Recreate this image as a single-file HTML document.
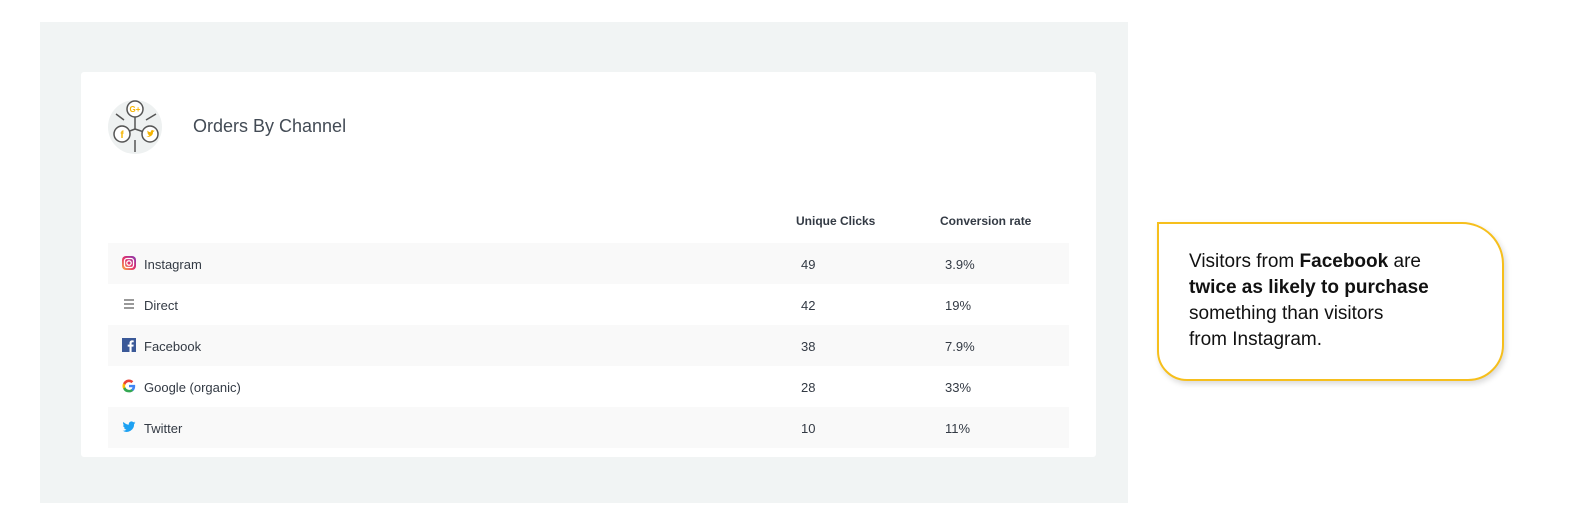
<!DOCTYPE html>
<html><head><style>
body{margin:0;width:1589px;height:521px;background:#fff;font-family:"Liberation Sans",Arial,sans-serif;position:relative;overflow:hidden}
.panel{position:absolute;left:40px;top:22px;width:1088px;height:481px;background:#f1f4f4}
.card{position:absolute;left:81px;top:72px;width:1015px;height:385px;background:#fff;border-radius:3px}
.title{position:absolute;left:193px;top:116px;font-size:18px;color:#434b55}
.th{position:absolute;top:214px;font-size:12px;font-weight:bold;color:#333a44}
.row{position:absolute;left:108px;width:961px;height:41px;font-size:13px;color:#333a44}
.row.s{background:#f9f9f9}
.row span{position:absolute;top:14px}
.row .n{left:36px}.row .a{left:693px}.row .b{left:837px}
.row svg{position:absolute;left:14px;top:13px}
.call{position:absolute;left:1157px;top:222px;width:343px;height:155px;border:2px solid #f6bf1c;border-radius:0 42px 36px 30px;box-shadow:2px 3px 6px rgba(0,0,0,.15);background:#fff}
.call p{margin:0;position:absolute;left:30px;top:25px;font-size:19px;line-height:26px;color:#111}
</style></head><body>
<div class="panel"></div>
<div class="card"></div>
<svg style="position:absolute;left:104px;top:96px" width="72" height="62" viewBox="0 0 72 62">
<circle cx="31" cy="31" r="27" fill="#eef1f1"/>
<g stroke="#555" stroke-width="1.5" fill="#fff">
<line x1="31" y1="20" x2="31" y2="33"/><line x1="31" y1="33" x2="18" y2="38"/><line x1="31" y1="33" x2="46" y2="38"/>
<line x1="31" y1="44" x2="31" y2="56"/><line x1="12" y1="18" x2="20" y2="24"/><line x1="42" y1="24" x2="52" y2="18"/>
<circle cx="31" cy="13" r="8"/><circle cx="18" cy="38" r="8"/><circle cx="46" cy="38" r="8"/></g>
<text x="31" y="16" font-size="8" fill="#f5b400" text-anchor="middle" font-weight="bold">G+</text>
<text x="18" y="42" font-size="10" fill="#f5b400" text-anchor="middle" font-weight="bold">f</text>
<path d="M51 35a3 3 0 0 1-1 .3 1.6 1.6 0 0 0 .7-.9 3 3 0 0 1-1 .4 1.6 1.6 0 0 0-2.8 1.5 4.5 4.5 0 0 1-3.3-1.7 1.6 1.6 0 0 0 .5 2.1 1.6 1.6 0 0 1-.7-.2 1.6 1.6 0 0 0 1.3 1.6 1.6 1.6 0 0 1-.7 0 1.6 1.6 0 0 0 1.5 1.1A3.2 3.2 0 0 1 42 40a4.5 4.5 0 0 0 7-4z" fill="#f5b400"/>
</svg>
<div class="title">Orders By Channel</div>
<div class="th" style="left:796px">Unique Clicks</div>
<div class="th" style="left:940px">Conversion rate</div>
<div class="row s" style="top:243px"><svg width="14" height="14"><defs><linearGradient id="ig" x1="0" y1="1" x2="1" y2="0"><stop offset="0" stop-color="#fbb040"/><stop offset=".5" stop-color="#e1306c"/><stop offset="1" stop-color="#833ab4"/></linearGradient></defs><rect width="14" height="14" rx="4" fill="url(#ig)"/><rect x="2.5" y="2.5" width="9" height="9" rx="2.5" fill="none" stroke="#fff" stroke-width="1.3"/><circle cx="7" cy="7" r="2.2" fill="none" stroke="#fff" stroke-width="1.3"/></svg><span class="n">Instagram</span><span class="a">49</span><span class="b">3.9%</span></div>
<div class="row" style="top:284px"><svg width="14" height="14"><g stroke="#555" stroke-width="1.2"><line x1="2" y1="3" x2="12" y2="3"/><line x1="2" y1="7" x2="12" y2="7"/><line x1="2" y1="11" x2="12" y2="11"/></g></svg><span class="n">Direct</span><span class="a">42</span><span class="b">19%</span></div>
<div class="row s" style="top:325px"><svg width="14" height="14"><rect width="14" height="14" fill="#3b5998"/><path d="M9.6 14V8.6h1.8l.3-2H9.6V5.3c0-.6.2-1 1-1h1.1V2.5c-.2 0-.9-.1-1.6-.1-1.6 0-2.6 1-2.6 2.7v1.5H5.7v2h1.8V14z" fill="#fff"/></svg><span class="n">Facebook</span><span class="a">38</span><span class="b">7.9%</span></div>
<div class="row" style="top:366px"><svg width="14" height="14" viewBox="0 0 24 24"><path d="M22.6 12.2c0-.8-.1-1.5-.2-2.2H12v4.2h6a5.1 5.1 0 0 1-2.2 3.4v2.8h3.6c2-1.9 3.2-4.7 3.2-8.2z" fill="#4285f4"/><path d="M12 23c3 0 5.5-1 7.4-2.7l-3.6-2.8c-1 .7-2.3 1.1-3.8 1.1-2.9 0-5.4-2-6.3-4.6H2v2.9A11 11 0 0 0 12 23z" fill="#34a853"/><path d="M5.7 14c-.2-.7-.4-1.4-.4-2s.1-1.4.4-2V7.1H2a11 11 0 0 0 0 9.8z" fill="#fbbc05"/><path d="M12 5.4c1.6 0 3.1.6 4.2 1.7l3.2-3.2A11 11 0 0 0 2 7.1L5.7 10c.9-2.6 3.4-4.6 6.3-4.6z" fill="#ea4335"/></svg><span class="n">Google (organic)</span><span class="a">28</span><span class="b">33%</span></div>
<div class="row s" style="top:407px"><svg width="14" height="14" viewBox="0 0 24 24"><path fill="#1da1f2" d="M23 4.6a9 9 0 0 1-2.6.7 4.6 4.6 0 0 0 2-2.5 9 9 0 0 1-2.9 1.1 4.5 4.5 0 0 0-7.7 4.1A12.8 12.8 0 0 1 2.5 3.300a4.5 4.5 0 0 0 1.4 6 4.5 4.5 0 0 1-2-.6 4.5 4.5 0 0 0 3.6 4.5 4.5 4.5 0 0 1-2 .1 4.5 4.5 0 0 0 4.2 3.1A9 9 0 0 1 1 18.3a12.8 12.8 0 0 0 19.7-11.4A9 9 0 0 0 23 4.6z"/></svg><span class="n">Twitter</span><span class="a">10</span><span class="b">11%</span></div>
<div class="call"><p>Visitors from <b>Facebook</b> are<br><b>twice as likely to purchase</b><br>something than visitors<br>from Instagram.</p></div>
</body></html>
